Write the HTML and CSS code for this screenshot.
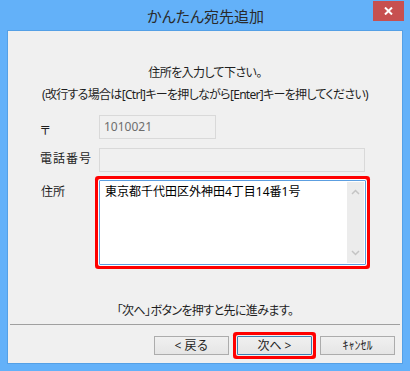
FILE: index.html
```html
<!DOCTYPE html>
<html lang="ja">
<head>
<meta charset="utf-8">
<title>かんたん宛先追加</title>
<link rel="stylesheet" href="styles.css">
</head>
<body>
<div class="window">
  <div class="titlebar">
    <span></span>
    <span class="title">かんたん宛先追加</span>
    <button class="close" aria-label="閉じる">
      <svg width="9" height="8" viewBox="0 0 9 8"><path d="M1 0.5 L8 7.5 M8 0.5 L1 7.5" stroke="#fff" stroke-width="2"/></svg>
    </button>
  </div>
  <div class="client">
    <p class="msg msg1">住所を入力して下さい。</p>
    <p class="msg msg2">(改行する場合は[Ctrl]キーを押しながら[Enter]キーを押してください)</p>
    <div class="form">
      <div class="row row-zip">
        <span class="label">〒</span>
        <div class="field zip">1010021</div>
      </div>
      <div class="row row-tel">
        <span class="label">電話番号</span>
        <div class="field tel"></div>
      </div>
      <div class="row row-addr">
        <span class="label">住所</span>
        <div class="textarea">
          <div class="text">東京都千代田区外神田4丁目14番1号</div>
          <div class="scrollbar">
            <svg width="9" height="6" viewBox="0 0 9 6"><polyline points="1,5 4.5,1.5 8,5" fill="none" stroke="#c4c4c4" stroke-width="1.5"/></svg>
            <svg width="9" height="6" viewBox="0 0 9 6"><polyline points="1,1 4.5,4.5 8,1" fill="none" stroke="#c4c4c4" stroke-width="1.5"/></svg>
          </div>
        </div>
      </div>
    </div>
    <p class="msg msg3">「次へ」ボタンを押すと先に進みます。</p>
    <div class="sep"></div>
    <div class="buttons">
      <button class="btn">&lt; 戻る</button>
      <button class="btn btn-default">次へ &gt;</button>
      <button class="btn">ｷｬﾝｾﾙ</button>
    </div>
  </div>
</div>
</body>
</html>
```
FILE: styles.css
```css
html, body {
  margin: 0;
  padding: 0;
}
body {
  font-family: "Noto Sans", "Noto Sans CJK JP", sans-serif;
  font-feature-settings: "palt";
  font-size: 12px;
  color: #1e1e1e;
  background: #fff;
}
.window {
  width: 410px;
  height: 371px;
  box-sizing: border-box;
  background: #63b1f9;
  padding: 0 7px 7px 7px;
  display: flex;
  flex-direction: column;
}
.titlebar {
  height: 30px;
  display: grid;
  grid-template-columns: 1fr auto 1fr;
  align-items: start;
  margin-right: -1px;
}
.title {
  font-size: 15px;
  line-height: 16px;
  margin-top: 8px;
  color: #2a2a2a;
  font-feature-settings: "palt";
}
.close {
  justify-self: end;
  width: 31px;
  height: 20px;
  margin-top: 1px;
  border: 0;
  padding: 0;
  background: #c75050;
  display: flex;
  align-items: center;
  justify-content: center;
}
.client {
  flex: 1;
  background: #f0f0f0;
  border: 1px solid #54a0e6;
  display: flex;
  flex-direction: column;
}
.msg {
  margin: 0;
  line-height: 16px;
  text-align: center;
  letter-spacing: -0.6px;
}
.msg1 {
  margin-top: 34px;
}
.msg2 {
  margin-top: 6px;
  letter-spacing: -0.7px;
}
.form {
  margin-top: 12px;
  padding-left: 32px;
  display: flex;
  flex-direction: column;
}
.row {
  display: flex;
  align-items: flex-start;
}
.label {
  width: 59px;
  line-height: 16px;
}
.row-zip .label {
  padding-top: 8px;
}
.row-tel {
  margin-top: 9px;
}
.row-tel .label {
  padding-top: 3px;
  letter-spacing: 1px;
}
.row-addr {
  margin-top: 8px;
}
.row-addr .label {
  padding-top: 4px;
  padding-left: 1px;
  width: 58px;
}
.field {
  box-sizing: border-box;
  height: 24px;
  border: 1px solid #d9d9d9;
  background: #f0f0f0;
  line-height: 22px;
  padding-left: 4px;
  color: #6d6d6d;
}
.zip {
  width: 117px;
}
.tel {
  width: 266px;
}
.textarea {
  box-sizing: border-box;
  width: 267px;
  height: 85px;
  border: 1px solid #5c9ee0;
  background: #fff;
  padding: 1px;
  display: flex;
  box-shadow: 0 0 0 1px #fff, 0 0 0 4px #ff0000;
  border-radius: 1px;
}
.text {
  flex: 1;
  padding: 2px 0 0 4px;
  line-height: 16px;
  color: #000;
  font-feature-settings: normal;
}
.scrollbar {
  width: 17px;
  background: #ececec;
  display: flex;
  flex-direction: column;
  align-items: center;
  justify-content: space-between;
  padding: 7px 0 7px 0;
}
.msg3 {
  margin-top: 38px;
}
.sep {
  margin: 5px 2px 0 2px;
  height: 1px;
  background: #a0a0a0;
}
.buttons {
  margin-top: 11px;
  display: flex;
  justify-content: flex-end;
  gap: 8px;
  padding-right: 7px;
}
.btn {
  box-sizing: border-box;
  width: 75px;
  height: 19px;
  border: 1px solid #acacac;
  background: linear-gradient(#f0f0f0, #e5e5e5);
  font-family: "Noto Sans", "Noto Sans CJK JP", sans-serif;
  font-size: 12px;
  line-height: 16px;
  color: #1e1e1e;
  padding: 0;
}
.btn-default {
  border-color: #3c7fb1;
  box-shadow: 0 0 0 1px #f0f0f0, 0 0 0 4px #ff0000;
  border-radius: 1px;
}
```
